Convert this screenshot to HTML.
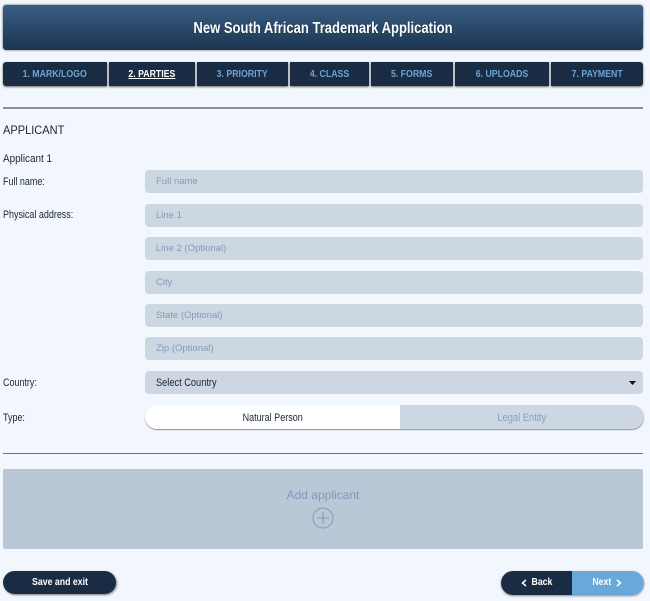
<!DOCTYPE html>
<html><head><meta charset="utf-8"><style>
html,body{margin:0;padding:0;width:650px;height:601px;overflow:hidden;background:#f2f7fe;font-family:"Liberation Sans",sans-serif}
.a{position:absolute;box-sizing:border-box}
.s{display:inline-block;transform:scaleX(.875);white-space:nowrap}
.t{transform:scaleX(.815)}
.o{transform-origin:0 50%}
.hdr{left:3px;top:5px;width:640px;height:45px;border-radius:3px;background:linear-gradient(#3a5f85,#1b3450);box-shadow:0 0 2px #555;color:#fff;font-size:16px;font-weight:bold;text-align:center;line-height:47px;text-shadow:0 0 1px #0b1b2d}
.tab{top:62px;height:24px;background:#192c44;color:#6da4d2;font-size:10px;font-weight:bold;text-align:center;line-height:25px;box-shadow:0 1px 2px #666}
.l{left:3px;color:#1c2530;font-size:11px;line-height:14px;white-space:nowrap}
.in{left:145px;width:498px;height:23px;background:#cdd7e2;border-radius:4px;color:#829ab9;font-size:9.5px;line-height:23px;padding-left:11px}
.hr{left:3px;width:640px;height:1px;background:#6b6f72}
.b{color:#fff;font-size:10px;font-weight:bold;text-align:center}
</style></head><body>
<div class="a hdr"><span class="s" style="transform:scaleX(.815)">New South African Trademark Application</span></div>
<div class="a tab" style="left:3px;width:104px;border-radius:3px 0 0 3px"><span class="s">1. MARK/LOGO</span></div>
<div class="a tab" style="left:109px;width:86px;color:#fff"><span class="s" style="text-decoration:underline">2. PARTIES</span></div>
<div class="a tab" style="left:197px;width:91px"><span class="s">3. PRIORITY</span></div>
<div class="a tab" style="left:290px;width:79px"><span class="s">4. CLASS</span></div>
<div class="a tab" style="left:371px;width:82px"><span class="s">5. FORMS</span></div>
<div class="a tab" style="left:455px;width:94px"><span class="s">6. UPLOADS</span></div>
<div class="a tab" style="left:551px;width:92px;border-radius:0 3px 3px 0"><span class="s">7. PAYMENT</span></div>
<div class="a hr" style="top:107px;background:#8e9296;height:2px"></div>
<div class="a l" style="top:123px;font-size:12px"><span class="s o" style="transform:scaleX(.92)">APPLICANT</span></div>
<div class="a l" style="top:152px;font-size:11px"><span class="s o" style="transform:scaleX(.9)">Applicant 1</span></div>
<div class="a l" style="top:175px"><span class="s t o">Full name:</span></div>
<div class="a l" style="top:208px"><span class="s t o">Physical address:</span></div>
<div class="a l" style="top:376px"><span class="s t o">Country:</span></div>
<div class="a l" style="top:411px"><span class="s t o">Type:</span></div>
<div class="a in" style="top:170px">Full name</div>
<div class="a in" style="top:204px">Line 1</div>
<div class="a in" style="top:237px">Line 2 (Optional)</div>
<div class="a in" style="top:271px">City</div>
<div class="a in" style="top:304px">State (Optional)</div>
<div class="a in" style="top:337px;line-height:24px">Zip (Optional)</div>
<div class="a in" style="top:371px;color:#1c2530;font-size:11px;line-height:25px"><span class="s o" style="transform:scaleX(.84)">Select Country</span></div>
<svg class="a" style="left:629px;top:381px" width="7" height="4"><path d="M0 0H7L3.500 4Z" fill="#111"/></svg>
<div class="a" style="left:145px;top:405px;width:499px;height:24px;border-radius:12px;background:#cdd7e2;box-shadow:0 1px 1px #8b8f93;overflow:hidden">
<div class="a" style="left:0;top:0;width:255px;height:24px;background:#fff;color:#1c2530;font-size:11px;text-align:center;line-height:26px"><span class="s" style="transform:scaleX(.82)">Natural Person</span></div>
<div class="a" style="left:255px;top:0;width:244px;height:24px;color:#87a1bf;font-size:11px;text-align:center;line-height:26px"><span class="s" style="transform:scaleX(.85)">Legal Entity</span></div>
</div>
<div class="a hr" style="top:453px"></div>
<div class="a" style="left:3px;top:469px;width:640px;height:80px;background:#bac7d7;border-radius:2px"></div>
<div class="a" style="left:223px;top:488px;width:200px;text-align:center;color:#7f9abb;font-size:12px;line-height:14px">Add applicant</div>
<svg class="a" style="left:312px;top:507px" width="22" height="22" fill="none" stroke="#7f9abb"><circle cx="11" cy="11" r="10"/><path d="M11 5V17M5 11H17"/></svg>
<div class="a b" style="left:3px;top:571px;width:113px;height:23px;border-radius:12px;background:#192c44;line-height:23px;box-shadow:1px 1px 2px #777"><span class="s">Save and exit</span></div>
<div class="a" style="left:501px;top:571px;width:143px;height:24px;border-radius:12px;overflow:hidden;box-shadow:0 1px 2px #888">
<div class="a b" style="left:0;top:0;width:71px;height:24px;background:#192c44;line-height:24px;padding-left:10px"><span class="s">Back</span></div>
<div class="a b" style="left:71px;top:0;width:72px;height:24px;background:#69a9da;line-height:24px;padding-right:13px"><span class="s">Next</span></div>
<svg class="a" style="left:20px;top:8px" width="6" height="8" fill="none" stroke="#fff" stroke-width="1.500"><path d="M5 1L1.500 4L5 7"/></svg>
<svg class="a" style="left:115px;top:8px" width="6" height="8" fill="none" stroke="#fff" stroke-width="1.500"><path d="M1 1L4.500 4L1 7"/></svg>
</div>
</body></html>
